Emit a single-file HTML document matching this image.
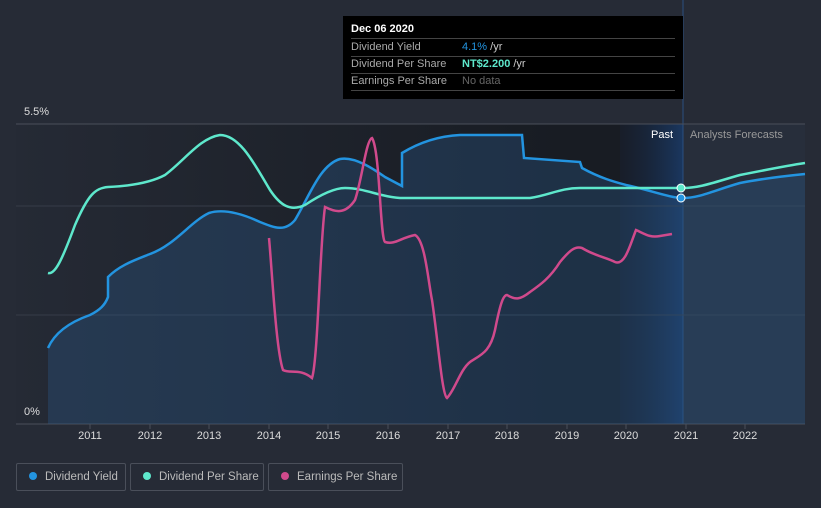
<!DOCTYPE html>
<html><head><meta charset="utf-8"><style>
html,body{margin:0;width:821px;height:508px;overflow:hidden}
body{background:#262b36;font-family:"Liberation Sans",sans-serif;position:relative}
.tip{position:absolute;left:343px;top:16px;width:340px;height:83px;background:#000;color:#aaa;font-size:11px}
.tip .r{position:absolute;left:8px;width:324px;border-bottom:1px solid #444;height:17px;line-height:17px}
.tip b{color:#fff}
.lg{position:absolute;top:463px;height:28px;border:1px solid #4a4f5a;border-radius:2px;color:#bbb;font-size:11.5px;line-height:27px;box-sizing:border-box;white-space:nowrap;overflow:hidden}
.lg i{display:inline-block;width:8px;height:8px;border-radius:50%;margin:0 8px 0 12px;vertical-align:0px}
.ax{position:absolute;top:430px;color:#ddd;font-size:11px;width:40px;text-align:center}
</style></head><body>
<svg width="821" height="508" style="position:absolute;left:0;top:0">
<defs>
<linearGradient id="pg" x1="0" x2="1" y1="0" y2="0">
<stop offset="0" stop-color="#252a35"/><stop offset="0.9" stop-color="#181c23"/><stop offset="1" stop-color="#181c23"/></linearGradient>
<linearGradient id="bl" x1="0" x2="1"><stop offset="0" stop-color="#172238" stop-opacity="0.3"/><stop offset="1" stop-color="#1a3a66" stop-opacity="0.9"/></linearGradient>
</defs>
<rect x="16" y="124" width="604" height="300" fill="url(#pg)"/>
<rect x="620" y="124" width="63" height="300" fill="#181c23"/>
<rect x="620" y="124" width="63" height="300" fill="url(#bl)"/>
<rect x="683" y="124" width="122" height="300" fill="#272e3b"/>
<line x1="683" y1="0" x2="683" y2="424" stroke="#2a4f80" stroke-width="1"/>
<line x1="16" y1="124" x2="805" y2="124" stroke="#4a4f5a"/>
<line x1="16" y1="206" x2="805" y2="206" stroke="#363c48"/>
<line x1="16" y1="315" x2="805" y2="315" stroke="#363c48"/>
<line x1="16" y1="424" x2="805" y2="424" stroke="#4a4f5a"/>
<g stroke="#4a4f5a"><line x1="90" y1="424" x2="90" y2="429"/><line x1="150" y1="424" x2="150" y2="429"/><line x1="209" y1="424" x2="209" y2="429"/><line x1="269" y1="424" x2="269" y2="429"/><line x1="328" y1="424" x2="328" y2="429"/><line x1="388" y1="424" x2="388" y2="429"/><line x1="448" y1="424" x2="448" y2="429"/><line x1="507" y1="424" x2="507" y2="429"/><line x1="567" y1="424" x2="567" y2="429"/><line x1="626" y1="424" x2="626" y2="429"/><line x1="686" y1="424" x2="686" y2="429"/><line x1="745" y1="424" x2="745" y2="429"/></g>
<path d="M48,348 C55,332 70,322 90,315 C100,310 105,305 108,297 L108,277 C120,265 135,260 150,254 C175,245 190,222 209,213 C225,208 245,215 260,222 C275,228 285,232 295,220 C310,195 320,165 340,159 C355,156 375,170 385,177 L402,186 L402,153 C420,142 440,136 460,135 L522,135 L524,158 L580,162 L582,168 C600,178 615,182 626,185 C650,190 670,198 683,198 C700,198 715,190 740,183 C760,179 785,176 805,174 L805,424 L48,424 Z" fill="#2a5a8a" fill-opacity="0.35"/>
<path d="M48,348 C55,332 70,322 90,315 C100,310 105,305 108,297 L108,277 C120,265 135,260 150,254 C175,245 190,222 209,213 C225,208 245,215 260,222 C275,228 285,232 295,220 C310,195 320,165 340,159 C355,156 375,170 385,177 L402,186 L402,153 C420,142 440,136 460,135 L522,135 L524,158 L580,162 L582,168 C600,178 615,182 626,185 C650,190 670,198 683,198 C700,198 715,190 740,183 C760,179 785,176 805,174" fill="none" stroke="#2394e0" stroke-width="2.5"/>
<path d="M48,273 C55,275 62,260 75,225 C88,195 95,188 108,187 C130,186 150,183 165,175 C185,160 200,138 220,135 C240,135 255,165 270,190 C280,205 290,212 305,205 C320,195 335,188 345,188 C365,188 380,197 400,198 L530,198 C550,195 560,188 580,188 L683,188 C700,188 715,182 740,175 C765,170 785,166 805,163" fill="none" stroke="#5ee8cc" stroke-width="2.5"/>
<path d="M269,238 C272,270 276,350 283,370 C290,374 300,368 312,378 C318,360 320,240 325,207 C335,212 345,215 355,200 C362,180 366,140 372,138 C380,150 380,238 385,242 C395,245 400,238 415,235 C425,240 428,280 432,300 C438,340 442,395 447,398 C455,390 460,370 470,362 C480,355 490,353 495,330 C500,305 503,295 507,295 C515,300 520,300 530,292 C540,285 550,278 560,262 C570,250 575,246 582,248 C595,256 605,257 615,262 C625,266 630,245 636,230 C645,234 650,238 660,236 L672,234" fill="none" stroke="#d04a8c" stroke-width="2.5"/>
<circle cx="681" cy="188" r="4" fill="#5ee8cc" stroke="#fff" stroke-width="1"/>
<circle cx="681" cy="198" r="4" fill="#2394e0" stroke="#fff" stroke-width="1"/>
</svg>
<div style="position:absolute;left:24px;top:106px;color:#ddd;font-size:11px">5.5%</div>
<div style="position:absolute;left:24px;top:406px;color:#ddd;font-size:11px">0%</div>
<div style="position:absolute;left:651px;top:129px;color:#fff;font-size:11px">Past</div>
<div style="position:absolute;left:690px;top:129px;color:#999;font-size:11px">Analysts Forecasts</div>
<div class="ax" style="left:70px">2011</div><div class="ax" style="left:130px">2012</div><div class="ax" style="left:189px">2013</div><div class="ax" style="left:249px">2014</div><div class="ax" style="left:308px">2015</div><div class="ax" style="left:368px">2016</div><div class="ax" style="left:428px">2017</div><div class="ax" style="left:487px">2018</div><div class="ax" style="left:547px">2019</div><div class="ax" style="left:606px">2020</div><div class="ax" style="left:666px">2021</div><div class="ax" style="left:725px">2022</div>
<div class="tip">
<div class="r" style="top:5px"><b>Dec 06 2020</b></div>
<div class="r" style="top:23px">Dividend Yield<span style="position:absolute;left:111px"><span style="color:#2394e0">4.1%</span> <span style="color:#ccc">/yr</span></span></div>
<div class="r" style="top:40px">Dividend Per Share<span style="position:absolute;left:111px"><span style="color:#5ee8cc;font-weight:bold">NT$2.200</span> <span style="color:#ccc">/yr</span></span></div>
<div class="r" style="top:57px">Earnings Per Share<span style="position:absolute;left:111px;color:#666">No data</span></div>
</div>
<div class="lg" style="left:16px;width:110px"><i style="background:#2394e0"></i>Dividend Yield</div>
<div class="lg" style="left:130px;width:134px"><i style="background:#5ee8cc"></i>Dividend Per Share</div>
<div class="lg" style="left:268px;width:135px"><i style="background:#d04a8c"></i>Earnings Per Share</div>
</body></html>
